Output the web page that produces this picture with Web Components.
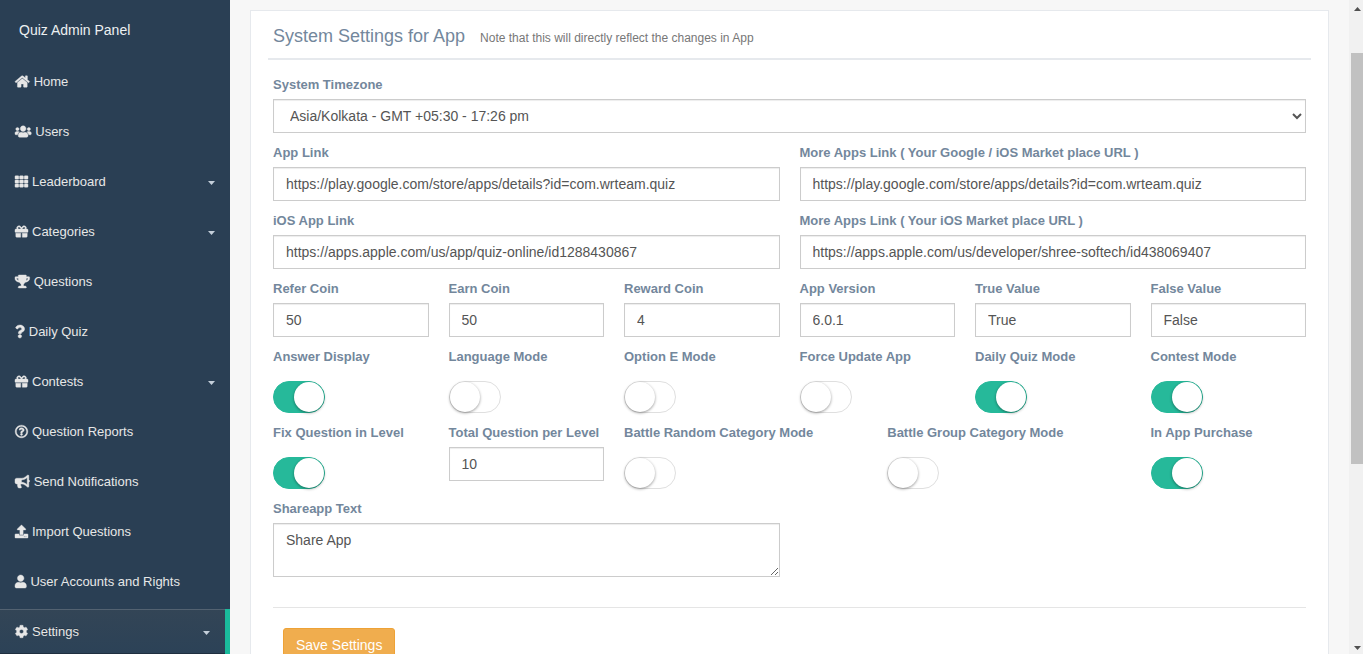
<!DOCTYPE html>
<html lang="en">
<head>
<meta charset="utf-8">
<title>Quiz Admin Panel</title>
<style>
  body { margin: 0; background: #f7f7f7; color: #73879c; font: 13px/19px "Liberation Sans", Arial, sans-serif; }
</style>
</head>
<body>
<admin-shell>
  <side-nav slot="nav" heading="Quiz Admin Panel">
    <nav-item icon="home">Home</nav-item>
    <nav-item icon="users">Users</nav-item>
    <nav-item icon="grid" expandable>Leaderboard</nav-item>
    <nav-item icon="gift" expandable>Categories</nav-item>
    <nav-item icon="trophy">Questions</nav-item>
    <nav-item icon="question">Daily Quiz</nav-item>
    <nav-item icon="gift" expandable>Contests</nav-item>
    <nav-item icon="help">Question Reports</nav-item>
    <nav-item icon="bullhorn">Send Notifications</nav-item>
    <nav-item icon="upload">Import Questions</nav-item>
    <nav-item icon="user">User Accounts and Rights</nav-item>
    <nav-item icon="cog" expandable active>Settings</nav-item>
  </side-nav>
  <settings-card heading="System Settings for App" note="Note that this will directly reflect the changes in App">
    <select-field span="12" label="System Timezone" value="Asia/Kolkata - GMT +05:30 - 17:26 pm"></select-field>
    <text-field span="6" label="App Link" value="https://play.google.com/store/apps/details?id=com.wrteam.quiz"></text-field>
    <text-field span="6" label="More Apps Link ( Your Google / iOS Market place URL )" value="https://play.google.com/store/apps/details?id=com.wrteam.quiz"></text-field>
    <text-field span="6" label="iOS App Link" value="https://apps.apple.com/us/app/quiz-online/id1288430867"></text-field>
    <text-field span="6" label="More Apps Link ( Your iOS Market place URL )" value="https://apps.apple.com/us/developer/shree-softech/id438069407"></text-field>
    <text-field span="2" label="Refer Coin" value="50"></text-field>
    <text-field span="2" label="Earn Coin" value="50"></text-field>
    <text-field span="2" label="Reward Coin" value="4"></text-field>
    <text-field span="2" label="App Version" value="6.0.1"></text-field>
    <text-field span="2" label="True Value" value="True"></text-field>
    <text-field span="2" label="False Value" value="False"></text-field>
    <switch-field span="2" label="Answer Display" checked></switch-field>
    <switch-field span="2" label="Language Mode"></switch-field>
    <switch-field span="2" label="Option E Mode"></switch-field>
    <switch-field span="2" label="Force Update App"></switch-field>
    <switch-field span="2" label="Daily Quiz Mode" checked></switch-field>
    <switch-field span="2" label="Contest Mode" checked></switch-field>
    <switch-field span="2" label="Fix Question in Level" checked></switch-field>
    <text-field span="2" label="Total Question per Level" value="10"></text-field>
    <switch-field span="3" label="Battle Random Category Mode"></switch-field>
    <switch-field span="3" label="Battle Group Category Mode"></switch-field>
    <switch-field span="2" label="In App Purchase" checked></switch-field>
    <area-field span="6" label="Shareapp Text" value="Share App"></area-field>
  </settings-card>
  <scroll-rail slot="rail"></scroll-rail>
</admin-shell>

<script>
const ICONS = {
  home: [576, 'M280.37 148.26L96 300.11V464a16 16 0 0 0 16 16l112.06-.29a16 16 0 0 0 15.92-16V368a16 16 0 0 1 16-16h64a16 16 0 0 1 16 16v95.64a16 16 0 0 0 16 16.05L464 480a16 16 0 0 0 16-16V300L295.67 148.26a12.19 12.19 0 0 0-15.3 0zM571.6 251.47L488 182.56V44.05a12 12 0 0 0-12-12h-56a12 12 0 0 0-12 12v72.61L318.47 43a48 48 0 0 0-61 0L4.34 251.47a12 12 0 0 0-1.6 16.9l25.5 31A12 12 0 0 0 45.15 301l235.22-193.74a12.19 12.19 0 0 1 15.3 0L530.9 301a12 12 0 0 0 16.9-1.6l25.5-31a12 12 0 0 0-1.7-16.93z'],
  users: [640, 'M96 224c35.3 0 64-28.7 64-64s-28.7-64-64-64-64 28.7-64 64 28.7 64 64 64zm448 0c35.3 0 64-28.7 64-64s-28.7-64-64-64-64 28.7-64 64 28.7 64 64 64zm32 32h-64c-17.6 0-33.5 7.1-45.1 18.6 40.3 22.1 68.9 62 75.1 109.4h66c17.7 0 32-14.3 32-32v-32c0-35.3-28.7-64-64-64zm-256 0c61.9 0 112-50.1 112-112S381.9 32 320 32 208 82.1 208 144s50.1 112 112 112zm76.8 32h-8.3c-20.8 10-43.9 16-68.5 16s-47.6-6-68.5-16h-8.3C179.6 288 128 339.6 128 403.2V432c0 26.5 21.5 48 48 48h288c26.5 0 48-21.5 48-48v-28.8c0-63.6-51.6-115.2-115.2-115.2zm-223.7-13.4C161.5 263.1 145.6 256 128 256H64c-35.3 0-64 28.7-64 64v32c0 17.7 14.3 32 32 32h65.9c6.3-47.4 34.9-87.3 75.2-109.4z'],
  grid: [512, 'M24 32h101a24 24 0 0 1 24 24v80a24 24 0 0 1-24 24H24a24 24 0 0 1-24-24V56a24 24 0 0 1 24-24zm181 0h102a24 24 0 0 1 24 24v80a24 24 0 0 1-24 24H205a24 24 0 0 1-24-24V56a24 24 0 0 1 24-24zm182 0h101a24 24 0 0 1 24 24v80a24 24 0 0 1-24 24H387a24 24 0 0 1-24-24V56a24 24 0 0 1 24-24zM24 192h101a24 24 0 0 1 24 24v80a24 24 0 0 1-24 24H24a24 24 0 0 1-24-24v-80a24 24 0 0 1 24-24zm181 0h102a24 24 0 0 1 24 24v80a24 24 0 0 1-24 24H205a24 24 0 0 1-24-24v-80a24 24 0 0 1 24-24zm182 0h101a24 24 0 0 1 24 24v80a24 24 0 0 1-24 24H387a24 24 0 0 1-24-24v-80a24 24 0 0 1 24-24zM24 352h101a24 24 0 0 1 24 24v80a24 24 0 0 1-24 24H24a24 24 0 0 1-24-24v-80a24 24 0 0 1 24-24zm181 0h102a24 24 0 0 1 24 24v80a24 24 0 0 1-24 24H205a24 24 0 0 1-24-24v-80a24 24 0 0 1 24-24zm182 0h101a24 24 0 0 1 24 24v80a24 24 0 0 1-24 24H387a24 24 0 0 1-24-24v-80a24 24 0 0 1 24-24z'],
  gift: [512, 'M32 448c0 17.7 14.3 32 32 32h160V320H32v128zm256 32h160c17.7 0 32-14.3 32-32V320H288v160zm192-320h-42.1c6.2-12.1 10.1-25.5 10.1-40 0-48.5-39.5-88-88-88-41.6 0-68.5 21.3-103 68.3-34.5-47-61.4-68.3-103-68.3-48.5 0-88 39.5-88 88 0 14.5 3.8 27.9 10.1 40H32c-17.7 0-32 14.3-32 32v80c0 8.8 7.2 16 16 16h480c8.8 0 16-7.2 16-16v-80c0-17.7-14.3-32-32-32zm-326.1 0c-22.1 0-40-17.9-40-40s17.9-40 40-40c19.9 0 34.6 3.3 86.1 80h-86.1zm206.1 0h-86.1c51.4-76.5 65.7-80 86.1-80 22.1 0 40 17.9 40 40s-17.9 40-40 40z'],
  trophy: [576, 'M552 64H448V24c0-13.3-10.7-24-24-24H152c-13.3 0-24 10.7-24 24v40H24C10.7 64 0 74.7 0 88v56c0 35.7 22.5 72.4 61.9 100.7 31.5 22.7 69.8 37.1 110 41.7C203.3 338.5 240 360 240 360v72h-48c-35.3 0-64 20.7-64 56v12c0 6.6 5.4 12 12 12h296c6.6 0 12-5.4 12-12v-12c0-35.3-28.7-56-64-56h-48v-72s36.7-21.5 68.1-73.6c40.3-4.6 78.6-19 110-41.7 39.3-28.3 61.9-65 61.9-100.7V88c0-13.3-10.7-24-24-24zM99.3 192.8C74.9 175.2 64 155.6 64 144v-16h64.2c1 32.6 5.8 61.2 12.8 86.2-15.1-5.2-29.2-12.4-41.7-21.4zM512 144c0 16.1-17.7 36.1-35.3 48.8-12.5 9-26.7 16.2-41.8 21.4 7-25 11.8-53.6 12.8-86.2H512v16z'],
  question: [384, 'M202.021 0C122.202 0 70.503 32.703 29.914 91.026c-7.363 10.58-5.093 25.086 5.178 32.874l43.138 32.709c10.373 7.865 25.132 6.026 33.253-4.148 25.049-31.381 43.63-49.449 82.757-49.449 30.764 0 68.816 19.799 68.816 49.631 0 22.552-18.617 34.134-48.993 51.164-35.423 19.86-82.299 44.576-82.299 106.405V320c0 13.255 10.745 24 24 24h72.471c13.255 0 24-10.745 24-24v-5.773c0-42.86 125.268-44.645 125.268-160.627C377.504 66.256 286.902 0 202.021 0zM192 373.459c-38.196 0-69.271 31.075-69.271 69.271 0 38.195 31.075 69.27 69.271 69.27s69.271-31.075 69.271-69.271-31.075-69.27-69.271-69.27z'],
  help: [512, 'M256 8C119.043 8 8 119.083 8 256c0 136.997 111.043 248 248 248s248-111.003 248-248C504 119.083 392.957 8 256 8zm0 448c-110.532 0-200-89.431-200-200 0-110.495 89.472-200 200-200 110.491 0 200 89.471 200 200 0 110.53-89.431 200-200 200zm107.244-255.2c0 67.052-72.421 68.084-72.421 92.863V300c0 6.627-5.373 12-12 12h-45.647c-6.627 0-12-5.373-12-12v-8.659c0-35.745 27.1-50.034 47.579-61.516 17.561-9.845 28.324-16.541 28.324-29.579 0-17.246-21.999-28.693-39.784-28.693-23.189 0-33.894 10.977-48.942 29.969-4.057 5.12-11.46 6.071-16.666 2.124l-27.824-21.098c-5.107-3.872-6.251-11.066-2.644-16.363C184.846 131.491 214.94 112 261.794 112c49.071 0 101.45 38.304 101.45 88.8zM298 368c0 23.159-18.841 42-42 42s-42-18.841-42-42 18.841-42 42-42 42 18.841 42 42z'],
  bullhorn: [576, 'M576 240c0-23.63-12.95-44.04-32-55.12V32.01C544 23.26 537.02 0 512 0c-7.12 0-14.19 2.38-19.98 7.02l-85.03 68.03C364.28 109.19 310.66 128 256 128H64c-35.35 0-64 28.65-64 64v96c0 35.35 28.65 64 64 64h33.7c-1.39 10.48-2.18 21.14-2.18 32 0 39.77 9.26 77.35 25.56 110.94 5.19 10.69 16.52 17.06 28.4 17.06h74.28c26.05 0 41.69-29.84 25.9-50.56-16.4-21.52-26.15-48.36-26.15-77.44 0-11.11 1.62-21.79 4.41-32H256c54.66 0 108.28 18.81 150.98 52.95l85.03 68.03a32.023 32.023 0 0 0 19.98 7.02c24.92 0 32-22.78 32-32V295.13C563.05 284.04 576 263.63 576 240zm-96 141.42l-33.05-26.44C392.95 311.78 325.12 288 256 288v-96c69.12 0 136.95-23.78 190.95-66.98L480 98.58v282.84z'],
  upload: [512, 'M296 384h-80c-13.3 0-24-10.7-24-24V192h-87.7c-17.8 0-26.7-21.5-14.1-34.1L242.3 5.7c7.5-7.5 19.8-7.5 27.3 0l152.2 152.2c12.6 12.6 3.7 34.1-14.1 34.1H320v168c0 13.3-10.7 24-24 24zm216-8v112c0 13.3-10.7 24-24 24H24c-13.3 0-24-10.7-24-24V376c0-13.3 10.7-24 24-24h136v8c0 30.9 25.1 56 56 56h80c30.9 0 56-25.1 56-56v-8h136c13.3 0 24 10.7 24 24zm-124 88c0-11-9-20-20-20s-20 9-20 20 9 20 20 20 20-9 20-20zm64 0c0-11-9-20-20-20s-20 9-20 20 9 20 20 20 20-9 20-20z'],
  user: [448, 'M224 256c70.7 0 128-57.3 128-128S294.7 0 224 0 96 57.3 96 128s57.3 128 128 128zm89.6 32h-16.7c-22.2 10.2-46.9 16-72.9 16s-50.6-5.8-72.9-16h-16.7C60.2 288 0 348.2 0 422.4V464c0 26.5 21.5 48 48 48h352c26.5 0 48-21.5 48-48v-41.6c0-74.2-60.2-134.4-134.4-134.4z'],
  cog: [512, 'M487.4 315.7l-42.6-24.6c4.3-23.2 4.3-47 0-70.2l42.6-24.6c4.9-2.8 7.1-8.6 5.5-14-11.1-35.6-30-67.8-54.7-94.6-3.8-4.1-10-5.1-14.8-2.3L380.8 110c-17.9-15.4-38.5-27.3-60.8-35.1V25.8c0-5.6-3.9-10.5-9.4-11.7-36.7-8.2-74.3-7.8-109.2 0-5.5 1.2-9.4 6.1-9.4 11.7V75c-22.2 7.9-42.8 19.8-60.8 35.1L88.7 85.5c-4.9-2.8-11-1.9-14.8 2.3-24.7 26.7-43.6 58.9-54.7 94.6-1.7 5.4.6 11.2 5.5 14L67.3 221c-4.3 23.2-4.3 47 0 70.2l-42.6 24.6c-4.9 2.8-7.1 8.6-5.5 14 11.1 35.6 30 67.8 54.7 94.6 3.8 4.1 10 5.1 14.8 2.3l42.6-24.6c17.9 15.4 38.5 27.3 60.8 35.1v49.2c0 5.6 3.9 10.5 9.4 11.7 36.7 8.2 74.3 7.8 109.2 0 5.5-1.2 9.4-6.1 9.4-11.7v-49.2c22.2-7.9 42.8-19.8 60.8-35.1l42.6 24.6c4.9 2.8 11 1.9 14.8-2.3 24.7-26.7 43.6-58.9 54.7-94.6 1.5-5.5-.7-11.3-5.6-14.1zM256 336c-44.1 0-80-35.9-80-80s35.9-80 80-80 80 35.9 80 80-35.9 80-80 80z']
};

class Base extends HTMLElement {
  connectedCallback() {
    if (this.shadowRoot) return;
    this.attachShadow({ mode: 'open' }).innerHTML = this.render();
  }
  attr(name) { return this.getAttribute(name) || ''; }
}

customElements.define('admin-shell', class extends Base {
  render() {
    return `<style>
      :host { display: flex; height: 100vh; overflow: hidden; }
      main { flex: 1; min-width: 0; padding: 10px 20px; overflow-y: auto; scrollbar-width: none; }
    </style>
    <slot name="nav"></slot><main><slot></slot></main><slot name="rail"></slot>`;
  }
});

customElements.define('side-nav', class extends Base {
  render() {
    return `<style>
      :host { display: block; flex: none; width: 230px; background: #2a3f54; color: #e7e7e7; overflow: hidden; }
      a { display: block; box-sizing: border-box; height: 59px; padding: 2px 19px 0; font-size: 14px; line-height: 57px; color: #ecf0f1; text-decoration: none; }
    </style>
    <a href="#">${this.attr('heading')}</a><nav><slot></slot></nav>`;
  }
});

customElements.define('nav-item', class extends Base {
  render() {
    const [w, d] = ICONS[this.attr('icon')];
    const caret = this.hasAttribute('expandable')
      ? '<svg class="caret" viewBox="0 0 7 4" aria-hidden="true"><path d="M0 0h7L3.5 4z"/></svg>' : '';
    return `<style>
      :host { display: block; padding-bottom: 6px; }
      :host([active]) { border-right: 5px solid #1abb9c; }
      a { display: flex; align-items: center; gap: 4px; height: 44px; padding: 0 15px; color: #e7e7e7; font-weight: 500; text-decoration: none; }
      :host([active]) a { background: linear-gradient(#334556, #2c4257); text-shadow: rgba(0,0,0,.25) 0 -1px 0; box-shadow: rgba(0,0,0,.25) 0 1px 0, inset rgba(255,255,255,.16) 0 1px 0; }
      svg { flex: none; height: 13px; fill: currentColor; stroke: currentColor; stroke-width: 16; overflow: visible; }
      .caret { width: 7px; height: 4px; margin: 3px 0 0 auto; fill: #c4cfda; stroke: none; }
    </style>
    <a href="#"><svg viewBox="0 0 ${w} 512" aria-hidden="true"><path d="${d}"/></svg><span><slot></slot></span>${caret}</a>`;
  }
});

customElements.define('settings-card', class extends Base {
  render() {
    return `<style>
      :host { display: block; padding: 10px 17px; background: #fff; border: 1px solid #e6e9ed; }
      header { display: flex; align-items: baseline; gap: 15px; height: 37px; padding: 0 5px; border-bottom: 2px solid #e6e9ed; }
      h2 { margin: 0; font-size: 18px; line-height: 30px; font-weight: 400; }
      small { font-size: 12px; color: #777; }
      form { padding: 15px 5px 20px; }
      .grid { display: grid; grid-template-columns: repeat(12, minmax(0, 1fr)); gap: 10px 20px; }
      hr { margin: 30px 0 20px; border: 0; border-top: 1px solid #e5e5e5; }
      button { display: block; height: 34px; margin-left: 10px; padding: 0 12px; border: 1px solid #eea236; border-radius: 3px; background: #f0ad4e; color: #fff; font: inherit; font-size: 14px; }
      ::slotted([span="12"]) { grid-column: span 12; }
      ::slotted([span="6"]) { grid-column: span 6; }
      ::slotted([span="3"]) { grid-column: span 3; }
      ::slotted([span="2"]) { grid-column: span 2; }
    </style>
    <header><h2>${this.attr('heading')}</h2><small>${this.attr('note')}</small></header>
    <form onsubmit="return false"><div class="grid"><slot></slot></div><hr><button type="submit">Save Settings</button></form>`;
  }
});

const FIELD_CSS = `
  :host { display: block; }
  label { display: block; margin-bottom: 5px; font-weight: 700; white-space: nowrap; }
  .control { display: block; box-sizing: border-box; width: 100%; height: 34px; margin: 0; padding: 6px 12px; border: 1px solid #ccc; border-radius: 0; background-color: #fff; box-shadow: inset 0 1px 1px rgba(0,0,0,.075); color: #555; font: inherit; font-size: 14px; line-height: 20px; }`;

class Field extends Base {
  render() {
    return `<style>${FIELD_CSS}${this.css || ''}</style><label for="field">${this.attr('label')}</label>${this.control()}`;
  }
}

customElements.define('text-field', class extends Field {
  control() { return `<input class="control" id="field" type="text" value="${this.attr('value')}">`; }
});

customElements.define('select-field', class extends Field {
  control() { return `<select class="control" id="field"><option>${this.attr('value')}</option></select>`; }
});

customElements.define('area-field', class extends Field {
  css = 'textarea.control { height: 54px; resize: both; }';
  control() { return `<textarea class="control" id="field">${this.attr('value')}</textarea>`; }
});

customElements.define('switch-field', class extends Field {
  css = `
    input { appearance: none; display: block; box-sizing: border-box; width: 52px; height: 32px; margin: 15px 0 0; border: 1px solid #dfdfdf; border-radius: 20px; background: #fff; }
    input::before { content: ""; display: block; width: 30px; height: 30px; border-radius: 50%; background: #fff; box-shadow: 0 1px 3px rgba(0,0,0,.4); }
    input:checked { border-color: #26b99a; background: #26b99a; }
    input:checked::before { margin-left: 20px; }`;
  control() { return `<input id="field" type="checkbox" role="switch"${this.hasAttribute('checked') ? ' checked' : ''}>`; }
});

customElements.define('scroll-rail', class extends Base {
  render() {
    return `<style>
      :host { display: flex; flex-direction: column; flex: none; width: 14px; background: #f1f1f1; }
      svg { flex: none; width: 14px; height: 17px; fill: #505050; }
      .before { flex: 36; }
      .thumb { flex: 411; margin-left: 2px; background: #c1c1c1; }
      .after { flex: 173; }
    </style>
    <svg viewBox="0 0 14 17" aria-hidden="true"><path d="M5 11l3.500-4L12 11z"/></svg>
    <div class="before"></div><div class="thumb"></div><div class="after"></div>
    <svg viewBox="0 0 14 17" aria-hidden="true"><path d="M5 9l3.500 4L12 9z"/></svg>`;
  }
});
</script>
</body>
</html>
